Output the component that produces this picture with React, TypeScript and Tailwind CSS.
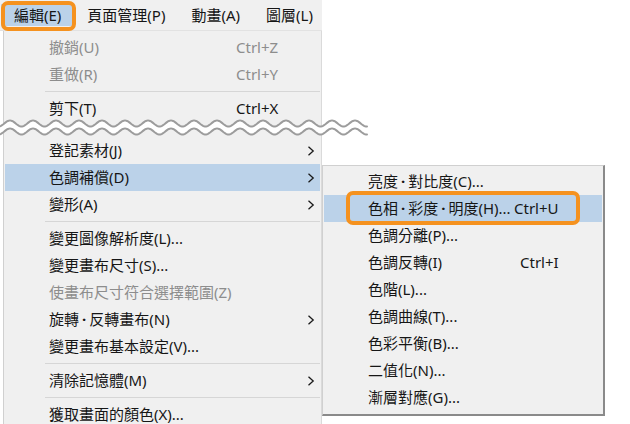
import React from "react";

// wavy "cut" marks drawn over the menu
function wave(cy: number) {
  const pts: [number, number][] = [];
  for (let x = 0; x <= 367; x += 1) {
    pts.push([x, cy - 3 * Math.cos((2 * Math.PI * (x - 10)) / 23)]);
  }
  return pts;
}

function WaveCut() {
  const top = wave(5.5);
  const bottom = wave(13.5);
  const line = (p: [number, number][]) => p.map(([x, y]) => `${x},${y.toFixed(2)}`).join(" ");
  const fill = line(top) + " " + line([...bottom].reverse());
  return (
    <div className="relative h-[15px]">
      <svg className="absolute left-[-4px] top-[-4px]" width="370" height="20" viewBox="0 0 370 20">
        <polygon points={fill} fill="#ffffff" />
        <polyline points={line(top)} fill="none" stroke="#9c9c9c" strokeWidth="2" strokeLinecap="round" />
        <polyline points={line(bottom)} fill="none" stroke="#9c9c9c" strokeWidth="2" strokeLinecap="round" />
      </svg>
    </div>
  );
}

function Chevron() {
  return (
    <svg width="8" height="10" viewBox="0 0 8 10" className="shrink-0">
      <path d="M1.5 0.8 L6.2 5 L1.5 9.2" fill="none" stroke="#1a1a1a" strokeWidth="1.3" />
    </svg>
  );
}

const Dot = () => <span className="inline-block px-[3px] font-bold">·</span>;

function Row({
  label,
  shortcut,
  arrow,
  disabled,
  active,
  labelW = "w-[187px]",
}: {
  label: React.ReactNode;
  shortcut?: string;
  arrow?: boolean;
  disabled?: boolean;
  active?: boolean;
  labelW?: string;
}) {
  return (
    <div
      className={`mx-px flex h-[27px] items-center pl-[44px] pr-[5px] ${active ? "bg-[#bbd2e9]" : ""} ${
        disabled ? "text-[#8d8d8d]" : "text-[#161616]"
      }`}
    >
      <span className={`${labelW} shrink-0 whitespace-nowrap`}>{label}</span>
      <span className="flex-1 whitespace-nowrap">{shortcut}</span>
      {arrow && <Chevron />}
    </div>
  );
}

function Sep() {
  return (
    <div className="flex h-[7px] items-center pl-[41px] pr-px">
      <div className="h-px w-full bg-[#d6d6d6]" />
    </div>
  );
}

function BarItem({ children, active }: { children: React.ReactNode; active?: boolean }) {
  return (
    <div className={`flex h-[22px] shrink-0 items-center whitespace-nowrap px-[13px] ${active ? "bg-[#bbd2e9]" : ""}`}>
      {children}
    </div>
  );
}

export default function App() {
  return (
    <div className="relative h-[424px] w-[630px] overflow-hidden bg-white font-['Noto_Sans','Noto_Sans_CJK_TC',sans-serif] text-[15px]">
      {/* menu bar */}
      <div className="flex h-[31px] w-[322px] items-center overflow-hidden border-b border-[#e2e2e2] bg-[#f0f0f0] pl-px text-[#161616]">
        <BarItem active>編輯(E)</BarItem>
        <BarItem>頁面管理(P)</BarItem>
        <BarItem>動畫(A)</BarItem>
        <BarItem>圖層(L)</BarItem>
      </div>

      {/* 編輯 dropdown */}
      <div className="ml-[3px] w-[319px] border-x border-l-[#d0d0d0] border-r-[#dadada] bg-[#f0f0f0] pt-[3px]">
        <Row label="撤銷(U)" shortcut="Ctrl+Z" disabled />
        <Row label="重做(R)" shortcut="Ctrl+Y" disabled />
        <Sep />
        <Row label="剪下(T)" shortcut="Ctrl+X" />
        <WaveCut />
        <Row label="登記素材(J)" arrow />
        <Row label="色調補償(D)" arrow active />
        <Row label="變形(A)" arrow />
        <Sep />
        <Row label="變更圖像解析度(L)..." />
        <Row label="變更畫布尺寸(S)..." />
        <Row label="使畫布尺寸符合選擇範圍(Z)" disabled />
        <Row label={<>旋轉<Dot />反轉畫布(N)</>} arrow />
        <Row label="變更畫布基本設定(V)..." />
        <Sep />
        <Row label="清除記憶體(M)" arrow />
        <Sep />
        <Row label="獲取畫面的顏色(X)..." />
      </div>

      {/* 色調補償 submenu */}
      <div className="absolute left-[322px] top-[165px] w-[283px] border border-[#d0d0d0] border-b-2 border-r-2 border-b-[#8a8a8a] border-r-[#8a8a8a] bg-[#f0f0f0] pb-[3px] pt-[2px]">
        <Row label={<>亮度<Dot />對比度(C)...</>} labelW="w-[152px]" />
        <Row label={<>色相<Dot />彩度<Dot />明度(H)...</>} shortcut="Ctrl+U" labelW="w-[146px]" active />
        <Row label="色調分離(P)..." labelW="w-[152px]" />
        <Row label="色調反轉(I)" shortcut="Ctrl+I" labelW="w-[152px]" />
        <Row label="色階(L)..." labelW="w-[152px]" />
        <Row label="色調曲線(T)..." labelW="w-[152px]" />
        <Row label="色彩平衡(B)..." labelW="w-[152px]" />
        <Row label="二值化(N)..." labelW="w-[152px]" />
        <Row label="漸層對應(G)..." labelW="w-[152px]" />
      </div>

      {/* orange call-out boxes */}
      <div className="absolute left-px top-px h-[30px] w-[75px] rounded-[7px] border-4 border-[#f5921f]" />
      <div className="absolute left-[346px] top-[191px] h-[34px] w-[234px] rounded-[7px] border-4 border-[#f5921f]" />
    </div>
  );
}
